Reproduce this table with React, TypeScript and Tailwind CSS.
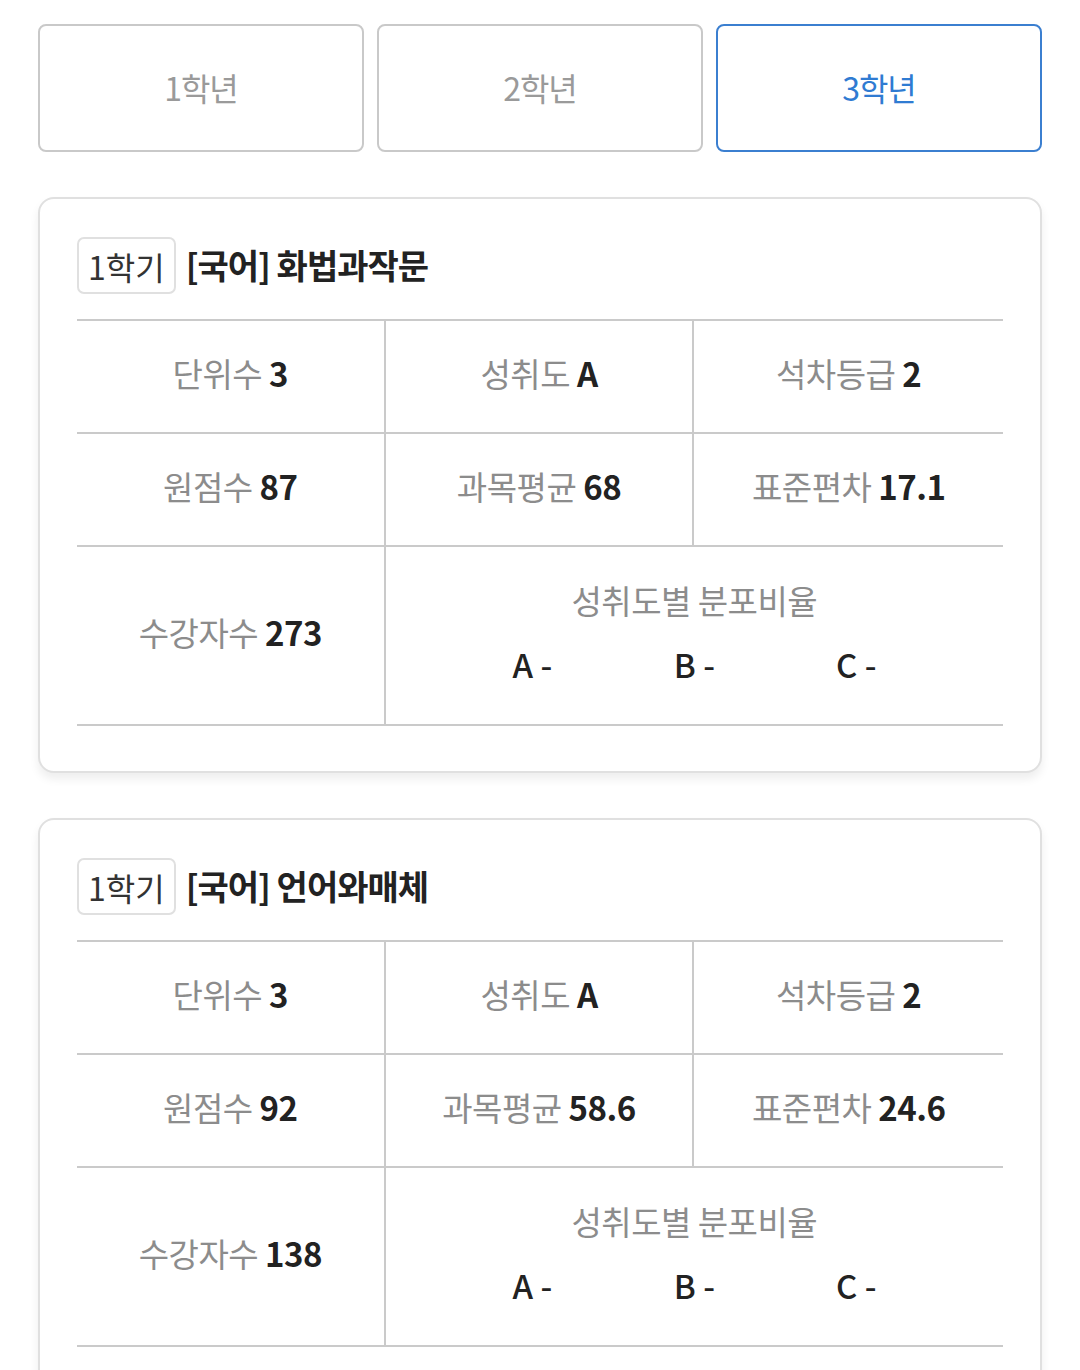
import React from 'react'

type Subject = {
  term: string
  name: string
  units: string
  achievement: string
  rank: string
  raw: string
  avg: string
  std: string
  students: string
}

const subjects: Subject[] = [
  { term: '1학기', name: '[국어] 화법과작문', units: '3', achievement: 'A', rank: '2', raw: '87', avg: '68', std: '17.1', students: '273' },
  { term: '1학기', name: '[국어] 언어와매체', units: '3', achievement: 'A', rank: '2', raw: '92', avg: '58.6', std: '24.6', students: '138' },
]

const grades = ['1학년', '2학년', '3학년']

function Stat({ label, value }: { label: string; value: string }) {
  return (
    <span className="pb-[5px] text-[33px] tracking-[-0.5px]">
      <span className="text-[#8c8c8c]">{label}</span>{' '}
      <span className="font-bold text-[#222]">{value}</span>
    </span>
  )
}

function SubjectCard({ s }: { s: Subject }) {
  return (
    <div className="rounded-[16px] border-2 border-[#e0e0e0] bg-white px-[37px] pt-[38px] pb-[45px] shadow-[0_6px_10px_rgba(0,0,0,0.07)]">
      <div className="flex items-center gap-[10px]">
        <span className="flex h-[57px] items-center rounded-[7px] border-2 border-[#e0e0e0] px-[9px] text-[32px] text-[#333]">
          {s.term}
        </span>
        <span className="pb-[2px] text-[34px] font-bold tracking-[-1px] text-[#222]">{s.name}</span>
      </div>
      <div className="mt-[25px] grid grid-cols-3 border-t-2 border-[#cacaca]">
        <div className="flex h-[113px] items-center justify-center border-b-2 border-r-2 border-[#cacaca]">
          <Stat label="단위수" value={s.units} />
        </div>
        <div className="flex h-[113px] items-center justify-center border-b-2 border-r-2 border-[#cacaca]">
          <Stat label="성취도" value={s.achievement} />
        </div>
        <div className="flex h-[113px] items-center justify-center border-b-2 border-[#cacaca]">
          <Stat label="석차등급" value={s.rank} />
        </div>
        <div className="flex h-[113px] items-center justify-center border-b-2 border-r-2 border-[#cacaca]">
          <Stat label="원점수" value={s.raw} />
        </div>
        <div className="flex h-[113px] items-center justify-center border-b-2 border-r-2 border-[#cacaca]">
          <Stat label="과목평균" value={s.avg} />
        </div>
        <div className="flex h-[113px] items-center justify-center border-b-2 border-[#cacaca]">
          <Stat label="표준편차" value={s.std} />
        </div>
        <div className="flex h-[179px] items-center justify-center border-b-2 border-r-2 border-[#cacaca]">
          <Stat label="수강자수" value={s.students} />
        </div>
        <div className="col-span-2 flex h-[179px] flex-col items-center justify-center border-b-2 border-[#cacaca] pb-[8px]">
          <span className="text-[33px] leading-[40px] tracking-[-0.5px] text-[#8c8c8c]">성취도별 분포비율</span>
          <div className="mt-[24px] flex">
            {['A', 'B', 'C'].map((g) => (
              <span key={g} className="w-[162px] text-center text-[33px] leading-[40px] font-medium text-[#222]">
                {g} -
              </span>
            ))}
          </div>
        </div>
      </div>
    </div>
  )
}

export default function App() {
  return (
    <div className="min-h-[1370px] bg-white px-[38px] pt-[24px] font-['Noto_Sans_CJK_KR',sans-serif]">
      <div className="grid grid-cols-3 gap-[13px]">
        {grades.map((g, i) => (
          <button
            key={g}
            className={
              i === 2
                ? 'h-[128px] rounded-[8px] border-2 border-[#3b7fd0] pb-[2px] text-[32px] tracking-[-1px] text-[#2f7bd2]'
                : 'h-[128px] rounded-[8px] border-2 border-[#c9c9c9] pb-[2px] text-[32px] tracking-[-1px] text-[#9a9a9a]'
            }
          >
            {g}
          </button>
        ))}
      </div>
      <div className="mt-[45px] flex flex-col gap-[45px]">
        {subjects.map((s) => (
          <SubjectCard key={s.name} s={s} />
        ))}
      </div>
    </div>
  )
}
